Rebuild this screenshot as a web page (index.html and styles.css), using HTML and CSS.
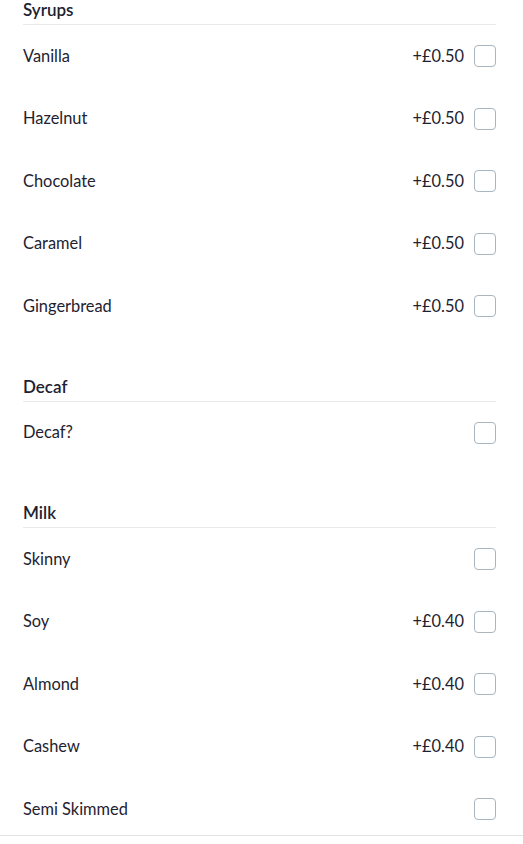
FILE: index.html
```html
<!DOCTYPE html>
<html lang="en">
<head>
<meta charset="utf-8">
<title>Options</title>
<link rel="stylesheet" href="styles.css">
</head>
<body>
<main class="options">
  <section class="group">
    <h2 class="group-title">Syrups</h2>
    <label class="row"><span class="name">Vanilla</span><span class="price">+£0.50</span><span class="check"></span></label>
    <label class="row"><span class="name">Hazelnut</span><span class="price">+£0.50</span><span class="check"></span></label>
    <label class="row"><span class="name">Chocolate</span><span class="price">+£0.50</span><span class="check"></span></label>
    <label class="row"><span class="name">Caramel</span><span class="price">+£0.50</span><span class="check"></span></label>
    <label class="row"><span class="name">Gingerbread</span><span class="price">+£0.50</span><span class="check"></span></label>
  </section>
  <section class="group">
    <h2 class="group-title">Decaf</h2>
    <label class="row"><span class="name">Decaf?</span><span class="check"></span></label>
  </section>
  <section class="group">
    <h2 class="group-title">Milk</h2>
    <label class="row"><span class="name">Skinny</span><span class="check"></span></label>
    <label class="row"><span class="name">Soy</span><span class="price">+£0.40</span><span class="check"></span></label>
    <label class="row"><span class="name">Almond</span><span class="price">+£0.40</span><span class="check"></span></label>
    <label class="row"><span class="name">Cashew</span><span class="price">+£0.40</span><span class="check"></span></label>
    <label class="row"><span class="name">Semi Skimmed</span><span class="check"></span></label>
  </section>
</main>
<footer class="bottom-bar"></footer>
</body>
</html>
```
FILE: styles.css
```css
html, body {
  margin: 0;
  padding: 0;
  background: #ffffff;
}
body {
  font-family: Lato, "Noto Sans", sans-serif;
  color: #1e2230;
  height: 844px;
  overflow: hidden;
}
.options {
  padding: 0 27px 0 23px;
}
.group + .group {
  margin-top: 39px;
}
.group-title {
  margin: 0;
  font-size: 17px;
  font-weight: 600;
  line-height: 20px;
  padding-bottom: 4px;
  border-bottom: 1px solid #e9e9ec;
  color: #1e2230;
}
.row {
  display: flex;
  align-items: center;
  height: 62.5px;
  font-size: 16.4px;
}
.name,
.price {
  padding-bottom: 2px;
}
.name {
  flex: 1;
}
.price {
  margin-right: 10px;
}
.check {
  width: 22px;
  height: 22px;
  box-sizing: border-box;
  border: 1.5px solid #a9b6bf;
  border-radius: 4px;
  background: #fff;
}
.bottom-bar {
  position: fixed;
  left: 0;
  right: 0;
  bottom: 0;
  height: 8px;
  background: #fff;
  border-top: 1px solid #e3e3e6;
}
```
